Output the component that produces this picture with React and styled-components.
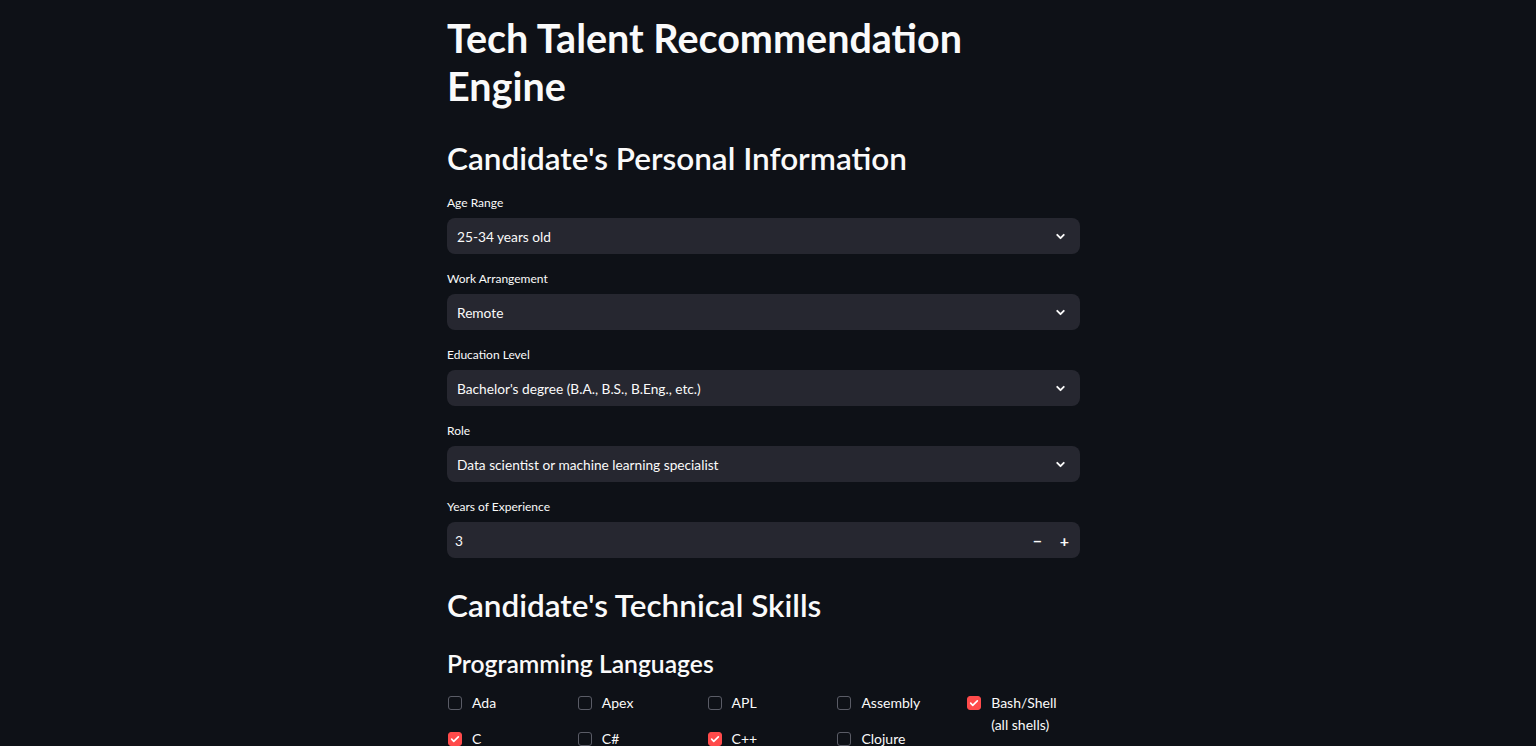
import styled, { createGlobalStyle } from 'styled-components'

const GlobalStyle = createGlobalStyle`
  html, body {
    margin: 0;
    padding: 0;
    background: #0e1117;
    color: #fafafa;
    font-family: "Source Sans Pro", Lato, "Noto Sans", sans-serif;
  }
`

const Page = styled.div`
  min-height: 746px;
  display: flex;
  justify-content: center;
  padding-right: 9px;
  overflow: hidden;
`

const Main = styled.main`
  width: 633px;
  padding-top: 14px;
`

const Title = styled.h1`
  font-size: 39.5px;
  font-weight: 700;
  line-height: 48px;
  margin: 0 0 29px;
  width: 540px;
`

const SectionTitle = styled.h2`
  font-size: 31.5px;
  font-weight: 600;
  line-height: 38px;
  margin: ${({ $top }) => $top || 0}px 0 ${({ $gap }) => $gap}px;
`

const SubTitle = styled.h3`
  font-size: 24.7px;
  font-weight: 600;
  line-height: 29px;
  margin: 0 0 14px;
`

const Field = styled.div`
  display: flex;
  flex-direction: column;
  gap: 5px;
  margin-bottom: 15px;
`

const Label = styled.label`
  font-size: 12px;
  line-height: 20px;
`

const Box = styled.div`
  height: 36px;
  background: #262730;
  border-radius: 8px;
  display: flex;
  align-items: center;
  padding: 0 ${({ $right }) => $right}px 0 ${({ $left }) => $left}px;
  box-sizing: border-box;
  font-size: 13.7px;
`

const Value = styled.span`
  flex: 1;
`

const Chevron = () => (
  <svg width="13" height="13" viewBox="0 0 24 24" fill="none" stroke="#fafafa" strokeWidth="3.5" strokeLinecap="round" strokeLinejoin="round">
    <path d="M6 9l6 6 6-6" />
  </svg>
)

const StepButton = styled.span`
  width: 27px;
  text-align: center;
  font-size: 16px;
  font-weight: 700;
`

const Columns = styled.div`
  display: grid;
  grid-template-columns: repeat(5, 1fr);
  column-gap: 16px;
`

const Column = styled.div`
  display: flex;
  flex-direction: column;
  gap: 14px;
`

const CheckItem = styled.div`
  display: flex;
  align-items: flex-start;
  gap: 10px;
  font-size: 14px;
  line-height: 22px;
  padding-right: 8px;
`

const Square = styled.span`
  flex: none;
  width: 14px;
  height: 14px;
  margin: 4px 0 0 1px;
  border-radius: 3px;
  box-sizing: border-box;
  border: 1px solid ${({ $on }) => ($on ? '#ff4b4b' : '#5a5c66')};
  background: ${({ $on }) => ($on ? '#ff4b4b' : 'transparent')};
  display: flex;
  align-items: center;
  justify-content: center;
`

const Check = ({ label, on }) => (
  <CheckItem>
    <Square $on={on}>
      {on && (
        <svg width="10" height="10" viewBox="0 0 24 24" fill="none" stroke="#fff" strokeWidth="4" strokeLinecap="round" strokeLinejoin="round">
          <path d="M4 12.5l5 5L20 7" />
        </svg>
      )}
    </Square>
    <span>{label}</span>
  </CheckItem>
)

const selects = [
  ['Age Range', '25-34 years old'],
  ['Work Arrangement', 'Remote'],
  ['Education Level', "Bachelor's degree (B.A., B.S., B.Eng., etc.)"],
  ['Role', 'Data scientist or machine learning specialist'],
]

const languages = [
  [['Ada', false], ['C', true]],
  [['Apex', false], ['C#', false]],
  [['APL', false], ['C++', true]],
  [['Assembly', false], ['Clojure', false]],
  [['Bash/Shell (all shells)', true]],
]

const App = () => (
  <Page>
    <GlobalStyle />
    <Main>
      <Title>Tech Talent Recommendation Engine</Title>
      <SectionTitle $gap={16}>Candidate's Personal Information</SectionTitle>

      {selects.map(([label, value]) => (
        <Field key={label}>
          <Label>{label}</Label>
          <Box $left={10} $right={13}>
            <Value>{value}</Value>
            <Chevron />
          </Box>
        </Field>
      ))}

      <Field>
        <Label>Years of Experience</Label>
        <Box $left={8} $right={2}>
          <Value>3</Value>
          <StepButton>−</StepButton>
          <StepButton>+</StepButton>
        </Box>
      </Field>

      <SectionTitle $top={28} $gap={25}>Candidate's Technical Skills</SectionTitle>
      <SubTitle>Programming Languages</SubTitle>

      <Columns>
        {languages.map((col, i) => (
          <Column key={i}>
            {col.map(([label, on]) => (
              <Check key={label} label={label} on={on} />
            ))}
          </Column>
        ))}
      </Columns>
    </Main>
  </Page>
)

export default App
